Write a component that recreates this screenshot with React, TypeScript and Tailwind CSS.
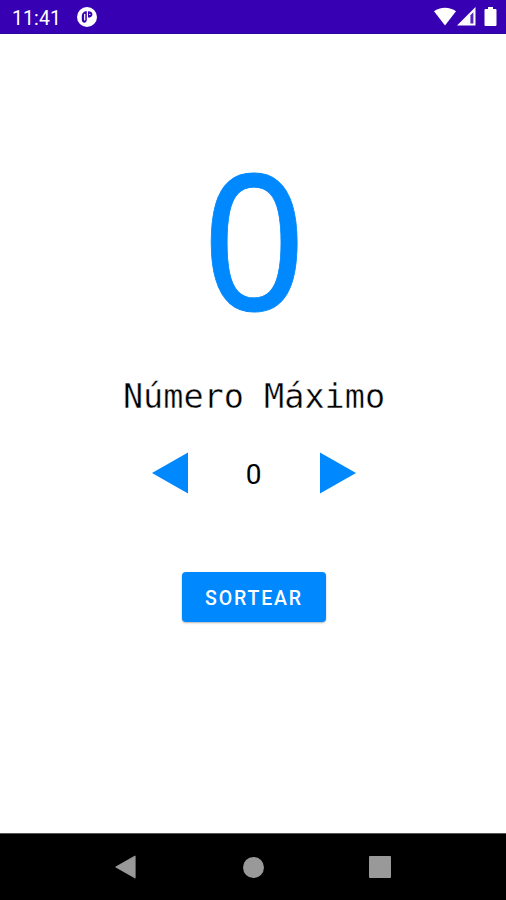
import React from "react";

function StatusBar() {
  return (
    <header className="flex h-[34px] shrink-0 items-center border-b border-[#2a0a9c] bg-[#3700b3] pl-3 pr-[9px] text-white">
      <span className="w-[65px] pt-[4px] font-[Roboto,sans-serif] text-[19.5px] leading-none tracking-[0.1px]">11:41</span>
      <svg className="mt-px h-5 w-5" viewBox="0 0 20 20">
        <circle cx="10" cy="10" r="10" fill="#fff" />
        <path d="M9.8 4.2v8.400c0 1.900-.9 3.200-2.500 3.200S4.800 14.500 4.800 12.600V9c0-2.700 2-4.800 5-4.800z" fill="#3700b3" />
        <path d="M7.700 7.300v5.500" stroke="#fff" strokeWidth="1.200" strokeLinecap="round" />
        <path d="M11 4.200c2.800 0 4.400 1.200 4.400 3.200S13.800 10.600 11 10.600z" fill="#3700b3" />
        <circle cx="12.800" cy="7.400" r=".7" fill="#fff" />
      </svg>
      <div className="ml-auto flex items-center">
        <svg className="h-[19px] w-[22px]" viewBox="0 0 22 19">
          <path d="M0 4.300C6-.600 16-.600 22 4.300L11 18.500z" fill="#fff" />
        </svg>
        <svg className="ml-px h-[19px] w-[19px]" viewBox="0 0 19 19">
          <path d="M0 18.500 18.500 0v18.500z" fill="#fff" />
          <path d="M13.400 8.300 16.400 5.300v11.300h-3z" fill="#3700b3" opacity=".85" />
        </svg>
        <svg className="ml-2 h-[19px] w-[13px]" viewBox="0 0 13 19">
          <path d="M4 0h5v2h2.500a1 1 0 0 1 1 1v15a1 1 0 0 1-1 1h-10a1 1 0 0 1-1-1V3a1 1 0 0 1 1-1H4z" fill="#fff" />
        </svg>
      </div>
    </header>
  );
}

function NavBar() {
  return (
    <nav className="flex h-[67px] shrink-0 items-center border-t border-[#555] bg-black pl-[115px]">
      <svg className="h-6 w-[21px]" viewBox="0 0 21 24">
        <path d="M1 12 20 1.2v21.600z" fill="#999" stroke="#999" strokeWidth="1.2" strokeLinejoin="round" />
      </svg>
      <div className="ml-[107px] h-[21px] w-[21px] rounded-full bg-[#999]" />
      <div className="ml-[105px] h-[22px] w-[22px] rounded-[1px] bg-[#999]" />
    </nav>
  );
}

export default function App() {
  return (
    <div className="flex h-[900px] w-[506px] flex-col overflow-hidden bg-white">
      <StatusBar />
      <main className="flex flex-1 flex-col items-center pl-[2px]">
        <div className="mt-[102px] h-[200px] scale-x-[0.96] font-['Noto_Sans',sans-serif] text-[189px] leading-[201px] text-[#0088ff] [-webkit-text-stroke:0.8px_#0088ff]">0</div>
        <h1 className="mt-[41px] h-[40px] whitespace-pre font-['DejaVu_Sans_Mono',monospace] text-[33.5px] leading-[40px] text-black [-webkit-text-stroke:0.4px_white]">Número Máximo</h1>
        <div className="mt-[35px] flex h-[42px] w-[204px] items-center justify-between">
          <svg className="h-[42px] w-9" viewBox="0 0 36 42">
            <path d="M0 21 36 .5v41z" fill="#0088ff" />
          </svg>
          <span className="pr-px pt-[3px] font-[Roboto,sans-serif] text-[28px] leading-none text-black">0</span>
          <svg className="h-[42px] w-9" viewBox="0 0 36 42">
            <path d="M36 21 0 .5v41z" fill="#0088ff" />
          </svg>
        </div>
        <button className="mt-[78px] h-[50px] w-[144px] rounded-[4px] bg-[#0088ff] pt-[4px] font-[Roboto,sans-serif] text-[19.5px] font-medium leading-none tracking-[1.85px] text-white shadow-[0_1px_2px_rgba(0,0,0,0.3)]">SORTEAR</button>
      </main>
      <NavBar />
    </div>
  );
}
